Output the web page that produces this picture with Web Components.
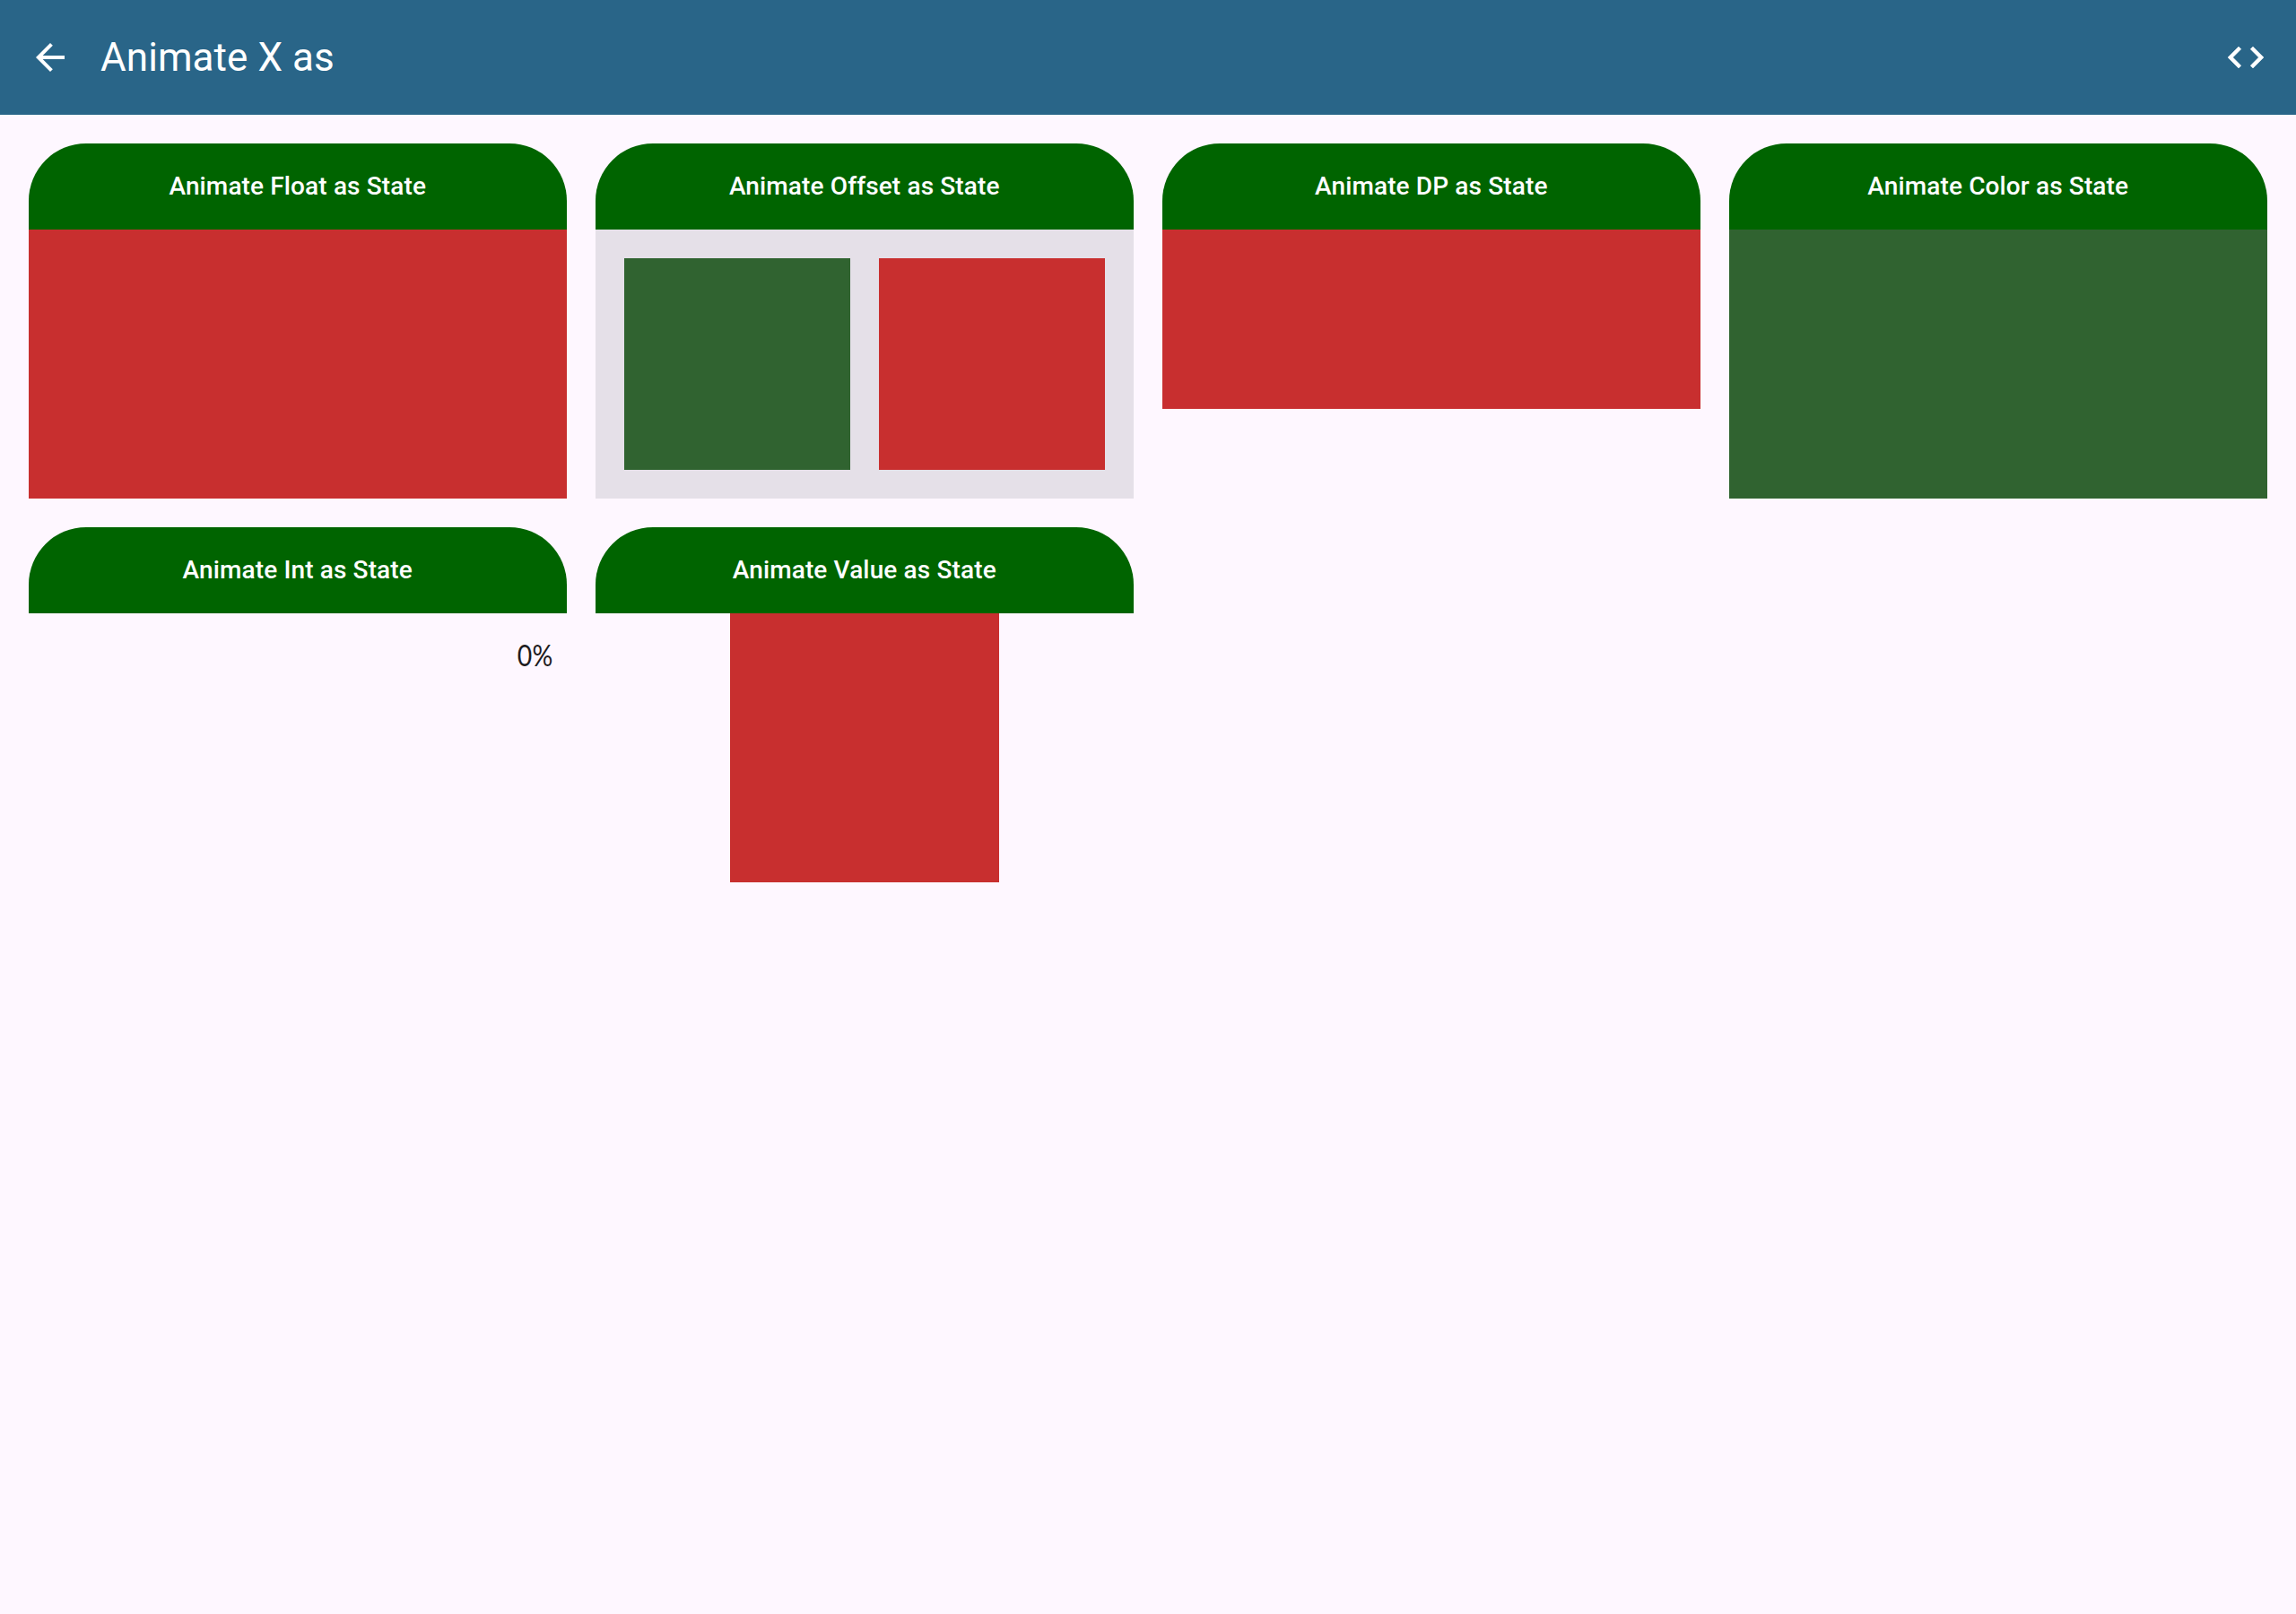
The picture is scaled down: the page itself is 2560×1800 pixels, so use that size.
<!DOCTYPE html>
<html lang="en">
<head>
<meta charset="utf-8">
<title>Animate X as</title>
<style>
body{margin:0;background:#fef7ff;font-family:Roboto,sans-serif;color:#1d1b20}
</style>
</head>
<body>
<demo-screen></demo-screen>
<script>
const define = (name, html) => {
  const t = document.createElement('template');
  t.innerHTML = html;
  customElements.define(name, class extends HTMLElement {
    constructor() {
      super();
      this.attachShadow({ mode: 'open' }).append(t.content.cloneNode(true));
    }
  });
};

define('top-bar', `
<style>
:host{display:flex;align-items:center;height:128px;padding:0 32px;background:#296588;color:#fff;box-sizing:border-box}
svg{width:48px;height:48px;fill:currentColor;display:block}
h1{flex:1;margin:0 0 0 32px;font-weight:400;font-size:44px;line-height:56px;letter-spacing:.07px}
</style>
<svg viewBox="0 0 24 24"><path d="M20 11H7.83l5.59-5.59L12 4l-8 8 8 8 1.41-1.41L7.83 13H20z"/></svg>
<h1><slot></slot></h1>
<svg viewBox="0 0 24 24" stroke="#fff" stroke-width=".25" stroke-linejoin="round"><path d="M9.4 16.6L4.8 12l4.6-4.6L8 6l-6 6 6 6 1.4-1.4zm5.2 0l4.6-4.6-4.6-4.6L16 6l6 6-6 6-1.4-1.4z"/></svg>`);

define('demo-card', `
<style>
:host{display:flex;flex-direction:column}
header{height:96px;border-radius:64px 64px 0 0;background:#006400;color:#fff;display:flex;align-items:center;justify-content:center;font-weight:500;font-size:28px;line-height:40px;letter-spacing:.13px;padding-right:.5px}
</style>
<header><slot name="title"></slot></header>
<slot></slot>`);

define('color-box', `
<style>
:host{display:block;height:300px;background:#c82f2f}
:host([tone=green]){background:#306330}
:host([size=short]){height:200px}
:host([size=square]){width:300px;align-self:center}
:host([size=fill]){height:auto;flex:1}
</style>`);

define('box-row', `
<style>
:host{display:flex;gap:32px;padding:32px;height:300px;box-sizing:border-box;background:#e5e0e8}
</style><slot></slot>`);

define('percent-label', `
<style>
:host{display:block;padding:23px 15.3px 24px;text-align:right;font-family:Lato,sans-serif;font-size:32px;line-height:48px}
span{display:inline-block;transform:scaleX(.89);transform-origin:right}
</style><span><slot></slot></span>`);

define('demo-screen', `
<style>
:host{display:block}
main{display:grid;grid-template-columns:repeat(4,1fr);gap:32px;padding:32px;align-items:start}
</style>
<top-bar>Animate X as</top-bar>
<main>
<demo-card><span slot="title">Animate Float as State</span><color-box></color-box></demo-card>
<demo-card><span slot="title">Animate Offset as State</span><box-row><color-box size="fill" tone="green"></color-box><color-box size="fill"></color-box></box-row></demo-card>
<demo-card><span slot="title">Animate DP as State</span><color-box size="short"></color-box></demo-card>
<demo-card><span slot="title">Animate Color as State</span><color-box tone="green"></color-box></demo-card>
<demo-card><span slot="title">Animate Int as State</span><percent-label>0%</percent-label></demo-card>
<demo-card><span slot="title">Animate Value as State</span><color-box size="square"></color-box></demo-card>
</main>`);
</script>
</body>
</html>
